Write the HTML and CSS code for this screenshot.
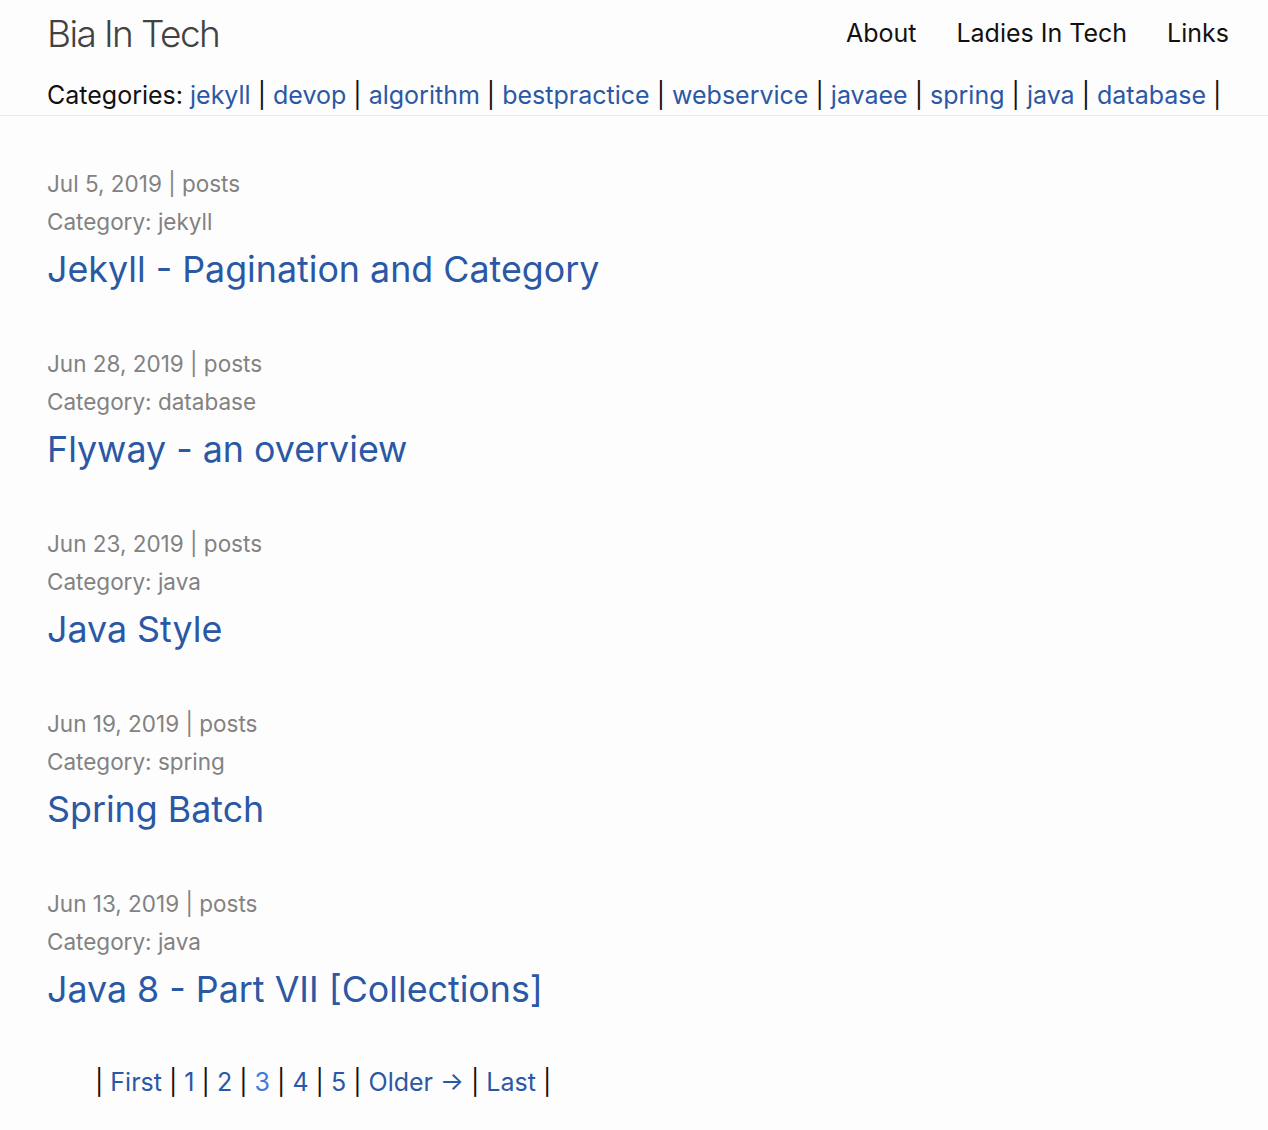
FILE: index.html
```html
<!DOCTYPE html>
<html lang="en">
<head>
<meta charset="utf-8">
<title>Bia In Tech</title>
<link rel="stylesheet" href="styles.css">
</head>
<body>
<header class="site-header">
  <div class="wrapper">
    <div class="header-top">
      <a class="site-title" href="#">Bia In Tech</a>
      <nav class="site-nav">
        <a class="page-link" href="#">About</a>
        <a class="page-link" href="#">Ladies In Tech</a>
        <a class="page-link" href="#">Links</a>
      </nav>
    </div>
    <div class="categories">Categories: <a href="#">jekyll</a> | <a href="#">devop</a> | <a href="#">algorithm</a> | <a href="#">bestpractice</a> | <a href="#">webservice</a> | <a href="#">javaee</a> | <a href="#">spring</a> | <a href="#">java</a> | <a href="#">database</a> |</div>
  </div>
</header>
<main class="page-content">
  <div class="wrapper">
    <ul class="post-list">
      <li class="post">
        <div class="post-meta">Jul 5, 2019 | posts</div>
        <div class="post-meta">Category: jekyll</div>
        <h2 class="post-title"><a href="#">Jekyll - Pagination and Category</a></h2>
      </li>
      <li class="post">
        <div class="post-meta">Jun 28, 2019 | posts</div>
        <div class="post-meta">Category: database</div>
        <h2 class="post-title"><a href="#">Flyway - an overview</a></h2>
      </li>
      <li class="post">
        <div class="post-meta">Jun 23, 2019 | posts</div>
        <div class="post-meta">Category: java</div>
        <h2 class="post-title"><a href="#">Java Style</a></h2>
      </li>
      <li class="post">
        <div class="post-meta">Jun 19, 2019 | posts</div>
        <div class="post-meta">Category: spring</div>
        <h2 class="post-title"><a href="#">Spring Batch</a></h2>
      </li>
      <li class="post">
        <div class="post-meta">Jun 13, 2019 | posts</div>
        <div class="post-meta">Category: java</div>
        <h2 class="post-title"><a href="#">Java 8 - Part VII [Collections]</a></h2>
      </li>
    </ul>
    <div class="pagination">| <a href="#">First</a> | <a href="#">1</a> | <a href="#">2</a> | <span class="current">3</span> | <a href="#">4</a> | <a href="#">5</a> | <a href="#">Older →</a> | <a href="#">Last</a> |</div>
  </div>
</main>
</body>
</html>
```

FILE: styles.css
```css
html, body {
  margin: 0;
  padding: 0;
  background: #fdfdfd;
}
body {
  font-family: Inter, "Noto Sans", sans-serif;
  font-size: 25px;
  line-height: 1.5;
  color: #111111;
}
a {
  color: #2a58a5;
  text-decoration: none;
}
.wrapper {
  padding: 0 39px 0 47px;
}
.site-header {
  border-bottom: 1px solid #e8e8e8;
}
.header-top {
  display: flex;
  justify-content: space-between;
  align-items: center;
  height: 68px;
}
.site-title {
  font-size: 37px;
  font-weight: 300;
  letter-spacing: -1.6px;
  color: #424242;
  line-height: 68px;
}
.site-nav {
  display: flex;
  gap: 40px;
}
.page-link {
  color: #111111;
}
.categories {
  height: 47px;
  line-height: 54px;
}
.page-content {
  padding-top: 49px;
}
.post-list {
  list-style: none;
  margin: 0;
  padding: 0;
}
.post {
  margin-bottom: 48px;
}
.post:last-child {
  margin-bottom: 0;
}
.post-meta {
  font-size: 22.5px;
  color: #828282;
  line-height: 38px;
}
.post-title {
  margin: 0;
  font-size: 35.8px;
  font-weight: 400;
  line-height: 56px;
}
.pagination {
  padding-left: 48px;
  margin-top: 47px;
  padding-bottom: 30px;
}
.pagination .current {
  color: #3d7be0;
}
```
